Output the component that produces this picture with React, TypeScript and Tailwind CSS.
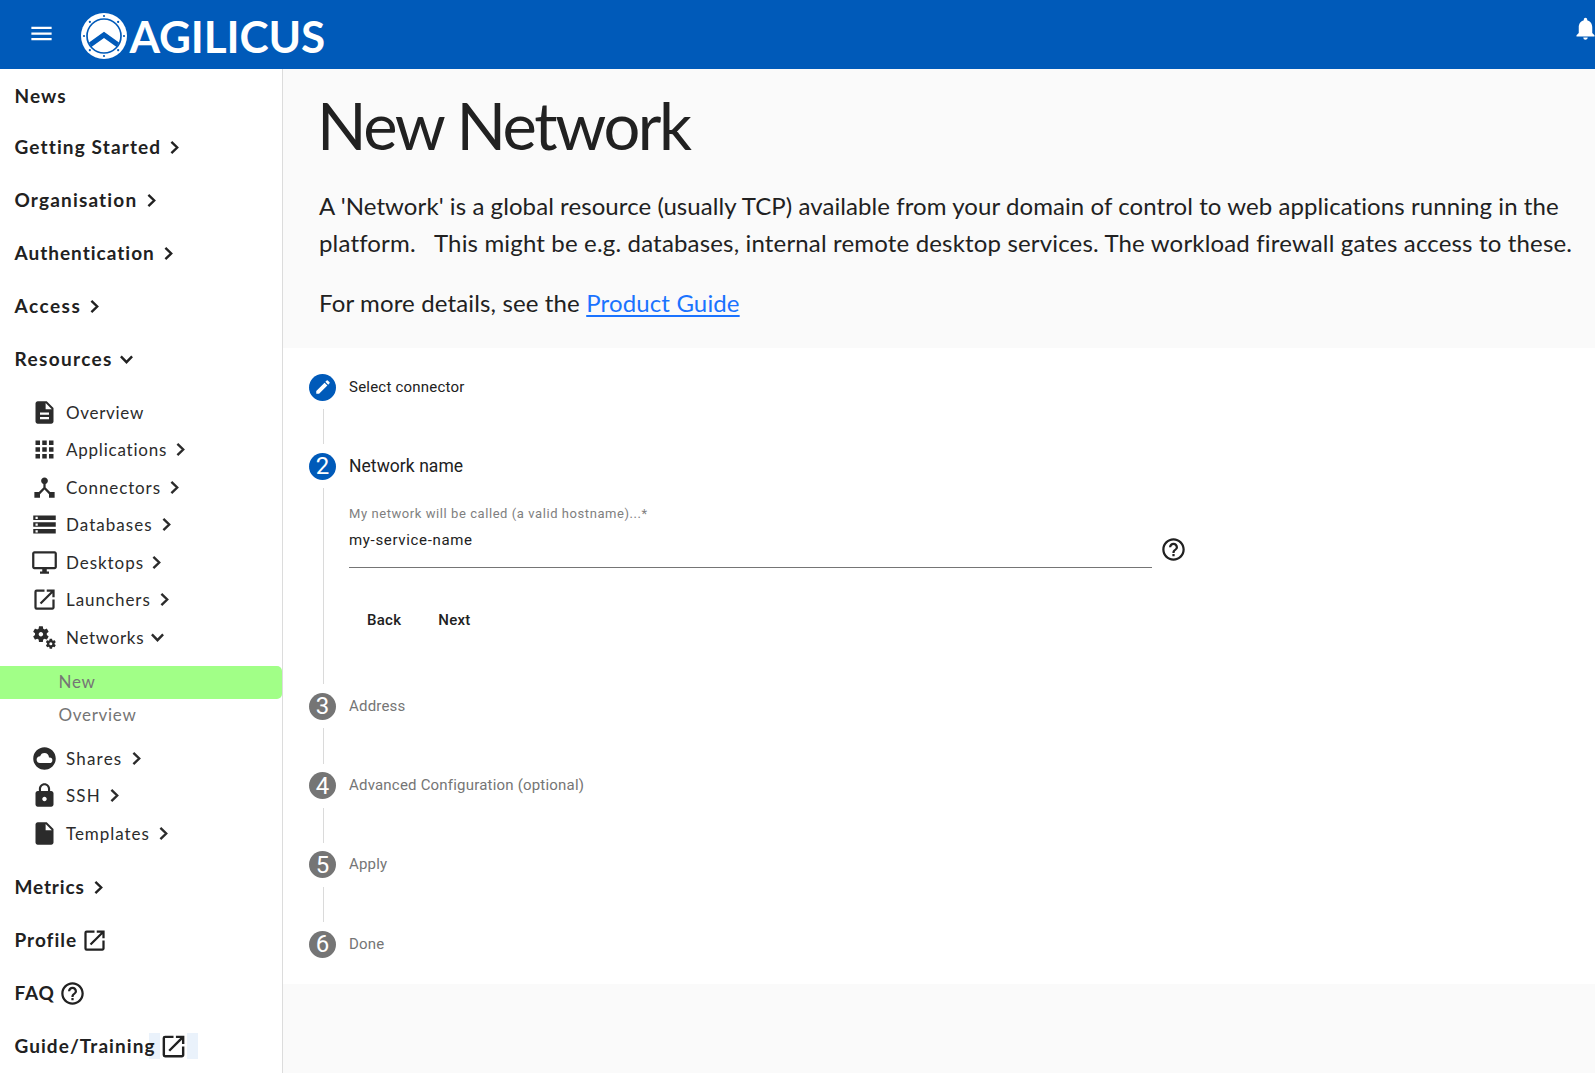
import type { ReactNode } from "react";
import type { IconType } from "react-icons";
import {
  MdApps,
  MdCloudCircle,
  MdDescription,
  MdDeviceHub,
  MdEdit,
  MdHelpOutline,
  MdInsertDriveFile,
  MdLaunch,
  MdLock,
  MdMenu,
  MdMiscellaneousServices,
  MdNotifications,
  MdOutlineDesktopWindows,
  MdStorage,
} from "react-icons/md";

function ChevronRight() {
  return (
    <svg width="9" height="13" viewBox="0 0 9 13" fill="none" className="ml-[10px] shrink-0">
      <path d="M1.4 0.9 7.2 6.5 1.4 12.1" stroke="currentColor" strokeWidth="2.4" />
    </svg>
  );
}

function ChevronDown() {
  return (
    <svg width="13" height="9" viewBox="0 0 13 9" fill="none" className="ml-2 shrink-0">
      <path d="M0.9 1.4 6.5 7.2 12.1 1.4" stroke="currentColor" strokeWidth="2.4" />
    </svg>
  );
}

function Section({ label, size, children }: { label: ReactNode; size: string; children?: ReactNode }) {
  return (
    <div className="flex h-[53px] shrink-0 items-center pl-[14.5px] text-[19px] font-bold text-[#212121]">
      <span className={`shrink-0 whitespace-nowrap ${size}`}>{label}</span>
      {children}
    </div>
  );
}

type Sub = { label: string; icon: IconType; size: string; state?: "open" | "closed" };

function SubItem({ label, icon: Icon, size, state }: Sub) {
  return (
    <div className="flex h-[37.5px] shrink-0 items-center pl-[30.5px] text-[17px] text-[#2b2b2b]">
      <Icon size={27} className="mr-[8.5px] shrink-0" />
      <span className={`shrink-0 whitespace-nowrap ${size}`}>{label}</span>
      {state === "closed" && <ChevronRight />}
      {state === "open" && <ChevronDown />}
    </div>
  );
}

const upper: Sub[] = [
  { label: "Overview", icon: MdDescription, size: "w-[77px] tracking-[0.7px]" },
  { label: "Applications", icon: MdApps, size: "w-[100px] tracking-[0.78px]", state: "closed" },
  { label: "Connectors", icon: MdDeviceHub, size: "w-[94px] tracking-[0.88px]", state: "closed" },
  { label: "Databases", icon: MdStorage, size: "w-[86px] tracking-[1.05px]", state: "closed" },
  { label: "Desktops", icon: MdOutlineDesktopWindows, size: "w-[76px] tracking-[0.95px]", state: "closed" },
  { label: "Launchers", icon: MdLaunch, size: "w-[84px] tracking-[0.95px]", state: "closed" },
  { label: "Networks", icon: MdMiscellaneousServices, size: "w-[76.5px] tracking-[0.68px]", state: "open" },
];

const lower: Sub[] = [
  { label: "Shares", icon: MdCloudCircle, size: "w-[55.5px] tracking-[1.2px]", state: "closed" },
  { label: "SSH", icon: MdLock, size: "w-[33.5px] tracking-[1.1px]", state: "closed" },
  { label: "Templates", icon: MdInsertDriveFile, size: "w-[82.5px] tracking-[0.95px]", state: "closed" },
];

function Shield() {
  const studs = [0, 45, 90, 135, 180, 225, 270, 315];
  return (
    <svg width="46" height="46" viewBox="0 0 46 46">
      <circle cx="23" cy="23" r="23" fill="#fff" />
      <circle cx="23" cy="23" r="17" fill="none" stroke="#005ab9" strokeWidth="1.7" />
      {studs.map((a) => (
        <circle key={a} cx="23" cy="3" r="1.1" fill="#005ab9" transform={`rotate(${a} 23 23)`} />
      ))}
      <path d="M8 29.5 23 18.8 38 29.5 35.6 34 23 25 10.4 34Z" fill="#005ab9" />
    </svg>
  );
}

function Header() {
  return (
    <header className="flex h-[69px] shrink-0 items-start bg-[#005ab9] text-white">
      <MdMenu size={27} className="mt-[20.4px] ml-[27.5px] shrink-0" />
      <div className="mt-[13px] ml-[26px] flex shrink-0 items-center">
        <Shield />
        <span className="ml-[3px] text-[44px] leading-[46px] font-bold tracking-[-0.1px]">AGILICUS</span>
      </div>
      <MdNotifications size={27} className="mt-[15px] mr-[-3.5px] ml-auto shrink-0" />
    </header>
  );
}

function Sidebar() {
  return (
    <nav className="flex w-[283px] shrink-0 flex-col overflow-hidden border-r border-[#dcdcdc] bg-white">
      <div className="-mb-[1.5px] pt-[0.5px]">
        <Section label="News" size="w-[51px] tracking-[1.05px]" />
      </div>
      <Section label="Getting Started" size="w-[145px] tracking-[1.13px]"><ChevronRight /></Section>
      <Section label="Organisation" size="w-[122px] tracking-[1.17px]"><ChevronRight /></Section>
      <Section label="Authentication" size="w-[139.5px] tracking-[1px]"><ChevronRight /></Section>
      <Section label="Access" size="w-[65.5px] tracking-[1.5px]"><ChevronRight /></Section>
      <Section label="Resources" size="w-[97.5px] tracking-[1.37px]"><ChevronDown /></Section>
      <div className="flex flex-col pt-[7.5px]">
        {upper.map((s) => <SubItem key={s.label} {...s} />)}
      </div>
      <div className="flex flex-col pt-[10px] pb-2 text-[17px] tracking-[0.7px] text-[#757575]">
        <div className="flex h-[33px] items-center rounded-r-[5px] bg-[#a1ff87] pb-[2px] pl-[58.5px]">New</div>
        <div className="flex h-[33px] items-center pb-[2px] pl-[58.5px]">Overview</div>
      </div>
      <div className="-mt-[0.5px] flex flex-col">
        {lower.map((s) => <SubItem key={s.label} {...s} />)}
      </div>
      <div className="flex flex-col pt-[8.5px]">
        <Section label="Metrics" size="w-[69.5px] tracking-[0.85px]"><ChevronRight /></Section>
        <Section label="Profile" size="w-[61px] tracking-[1px]"><MdLaunch size={27} className="ml-[5.5px] shrink-0" /></Section>
        <Section label="FAQ" size="w-[39px] tracking-[0.8px]"><MdHelpOutline size={27} className="ml-[5px] shrink-0" /></Section>
        <Section
          label={
            <span className="relative isolate">
              Guide/Training
              <span className="absolute -right-[4px] -bottom-[2px] -z-10 h-[26px] w-[11px] bg-[#eaf2fb]" />
            </span>
          }
          size="w-[141px] tracking-[1.06px]"
        >
          <MdLaunch size={29} className="ml-[3px] shrink-0" />
          <span className="ml-[-0.5px] h-[26px] w-[11px] shrink-0 bg-[#eaf2fb]" />
        </Section>
      </div>
    </nav>
  );
}

type StepProps = { badge: ReactNode; label: string; text: string; active?: boolean; last?: boolean; height: string; children?: ReactNode };

function Step({ badge, label, text, active, last, height, children }: StepProps) {
  return (
    <li className={`flex ${height}`}>
      <div className="flex w-7 shrink-0 flex-col items-center">
        <span className={`mr-px flex size-[27px] shrink-0 items-center justify-center rounded-full text-2xl leading-none text-white ${active ? "bg-[#005ab9]" : "bg-[#757575]"}`}>
          {badge}
        </span>
        {!last && <span className="my-[8.5px] w-px grow bg-[#dadada]" />}
      </div>
      <div className="ml-3 flex grow flex-col">
        <div className={`h-[27px] leading-[26px] ${text}`}>{label}</div>
        {children}
      </div>
    </li>
  );
}

const muted = "text-[15px] tracking-[0.2px] text-[#757575]";

function Stepper() {
  return (
    <ol className="flex h-[636px] shrink-0 flex-col bg-white pt-[25.5px] pl-[26px] font-[Roboto,sans-serif]">
      <Step active badge={<MdEdit size={18} />} label="Select connector" text="text-[15px] tracking-[0.22px] text-[#212121]" height="h-[79.3px]" />
      <Step active badge="2" label="Network name" text="text-[17.5px] tracking-[0.05px] text-[#212121]" height="h-[240px]">
        <div className="flex">
          <div className="flex h-[88.5px] w-[803px] flex-col border-b border-[#757575]">
            <div className="mt-[26px] text-[13px] leading-4 tracking-[0.57px] text-[#808080]">
              My network will be called (a valid hostname)...*
            </div>
            <div className="mt-[8px] text-[15px] leading-5 tracking-[0.66px] text-[#212121]">my-service-name</div>
          </div>
          <MdHelpOutline size={27} className="mt-[56.5px] ml-2 text-[#212121]" />
        </div>
        <div className="mt-[42px] flex gap-[37px] pl-[18px] text-[15px] leading-5 font-medium tracking-[0.26px] text-[#212121]">
          <button>Back</button>
          <button>Next</button>
        </div>
      </Step>
      <Step badge="3" label="Address" text={muted} height="h-[79.3px]" />
      <Step badge="4" label="Advanced Configuration (optional)" text={muted} height="h-[79.2px]" />
      <Step badge="5" label="Apply" text={muted} height="h-[79.3px]" />
      <Step badge="6" label="Done" text={muted} height="h-[27px]" last />
    </ol>
  );
}

export default function App() {
  return (
    <div className="flex h-[1073px] w-[1595px] flex-col overflow-hidden bg-[#fafafa] font-[Lato,sans-serif]">
      <Header />
      <div className="flex min-h-0 grow">
        <Sidebar />
        <main className="flex min-w-0 grow flex-col">
          <section className="h-[279px] shrink-0 pl-9 text-[#212121]">
            <h1 className="mt-[18px] -ml-[2px] text-[65px] leading-[76px] tracking-[-2.4px]">New Network</h1>
            <div className="mt-[24px] text-2xl leading-[37px] whitespace-nowrap">
              <p className="tracking-[0.08px]">
                A 'Network' is a global resource (usually TCP) available from your domain of control to web applications running in the
              </p>
              <p className="tracking-[0.165px]">
                platform.&nbsp;&nbsp; This might be e.g. databases, internal remote desktop services. The workload firewall gates access to these.
              </p>
              <p className="mt-[23px] tracking-[0.139px]">
                For more details, see the{" "}
                <a className="text-[#1a73ff] underline decoration-2 underline-offset-[3px]">Product Guide</a>
              </p>
            </div>
          </section>
          <Stepper />
        </main>
      </div>
    </div>
  );
}
